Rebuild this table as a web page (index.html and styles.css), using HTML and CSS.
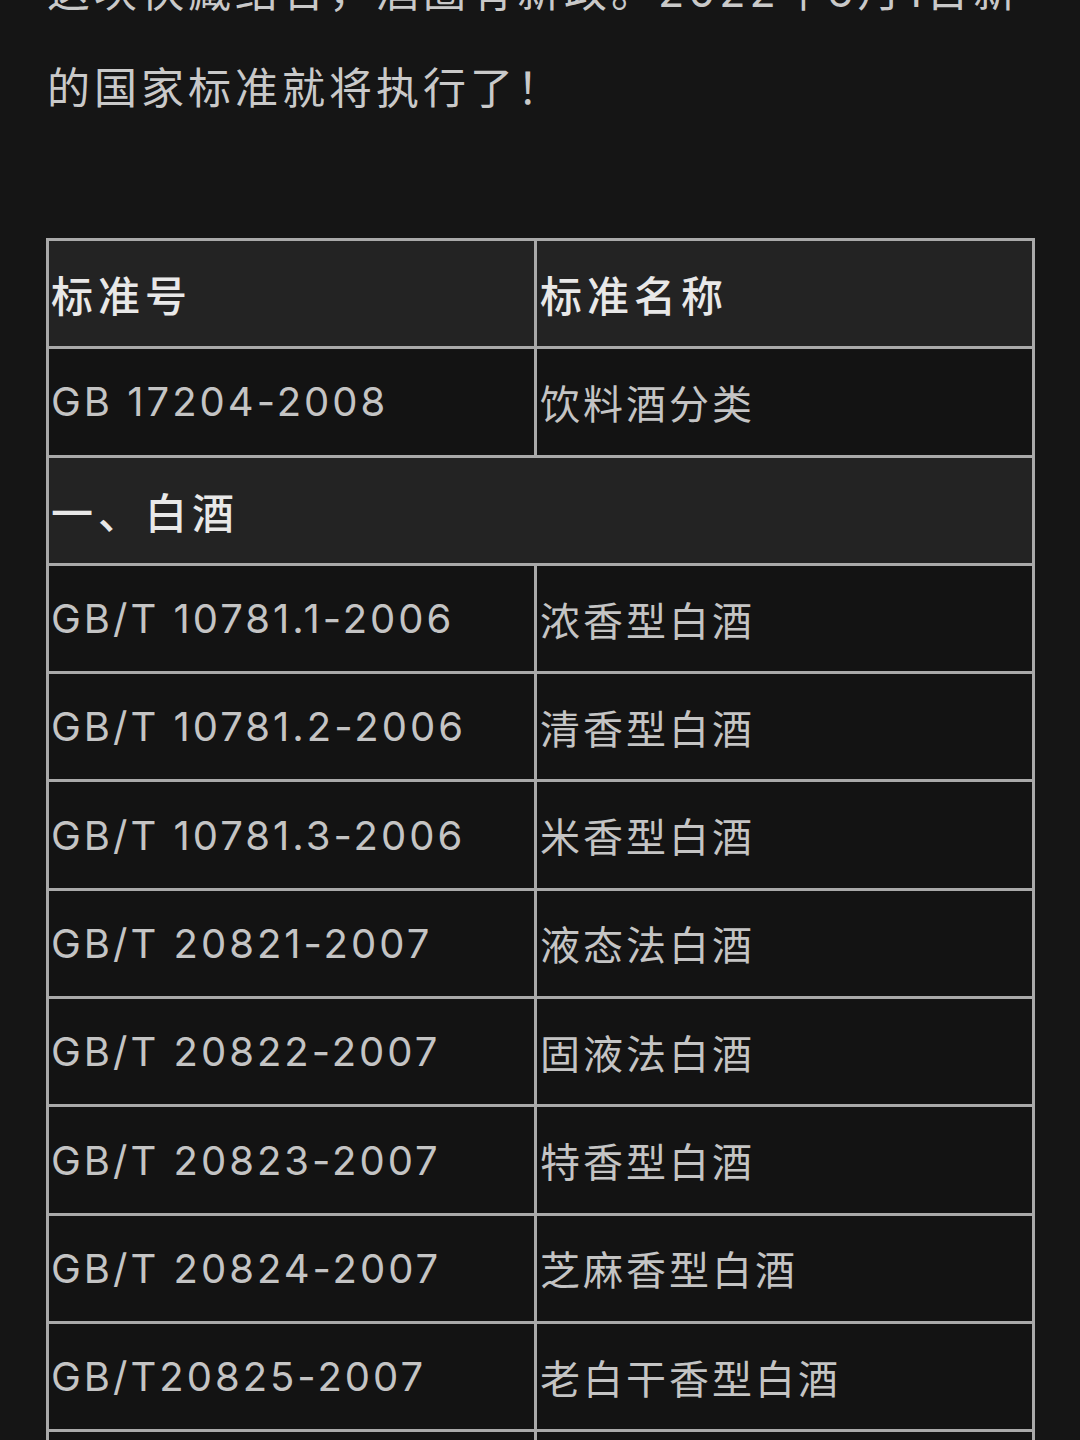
FILE: index.html
```html
<!DOCTYPE html>
<html lang="zh-CN">
<head>
<meta charset="utf-8">
<title>饮料酒标准</title>
<link rel="stylesheet" href="styles.css">
</head>
<body>
<div class="page">
  <p class="intro"><span class="line">这块快藏结合，酒圈有新政。2022年6月1日新</span><span class="line">的国家标准就将执行了！</span></p>
  <table class="std">
    <colgroup><col class="c1"><col class="c2"></colgroup>
    <tr class="head"><td>标准号</td><td>标准名称</td></tr>
    <tr><td>GB 17204-2008</td><td>饮料酒分类</td></tr>
    <tr class="head"><td colspan="2">一、白酒</td></tr>
    <tr><td>GB/T 10781.1-2006</td><td>浓香型白酒</td></tr>
    <tr><td>GB/T 10781.2-2006</td><td>清香型白酒</td></tr>
    <tr><td>GB/T 10781.3-2006</td><td>米香型白酒</td></tr>
    <tr><td>GB/T 20821-2007</td><td>液态法白酒</td></tr>
    <tr><td>GB/T 20822-2007</td><td>固液法白酒</td></tr>
    <tr><td>GB/T 20823-2007</td><td>特香型白酒</td></tr>
    <tr><td>GB/T 20824-2007</td><td>芝麻香型白酒</td></tr>
    <tr><td>GB/T20825-2007</td><td>老白干香型白酒</td></tr>
    <tr><td>GB/T 26760-2011</td><td>酱香型白酒</td></tr>
  </table>
</div>
</body>
</html>
```

FILE: styles.css
```css
html, body {
  margin: 0;
  padding: 0;
  background: #151515;
}
body {
  width: 1080px;
  height: 1440px;
  overflow: hidden;
  font-family: Inter, "Noto Sans CJK SC", sans-serif;
}
.page {
  padding: 0 46px;
}
.intro {
  margin: -57px 0 0 1px;
  color: #c9c9c9;
  font-size: 43px;
  line-height: 97px;
  letter-spacing: 4px;
}
.intro .line {
  display: block;
  white-space: nowrap;
}
.std {
  margin-top: 101px;
  width: 986px;
  table-layout: fixed;
  border-collapse: collapse;
  border: 3px solid #a9a9a9;
}
.c1 { width: 488px; }
.c2 { width: 498px; }
.std td {
  border: 3px solid #a9a9a9;
  height: 105.3px;
  padding: 0 0 0 2px;
  font-size: 40px;
  letter-spacing: 3px;
  color: #c4c4c4;
  background: #131313;
  white-space: nowrap;
  vertical-align: middle;
}
.std td + td {
  padding-left: 3px;
}
.std .head td {
  background: #232323;
  color: #e8e8e8;
  font-weight: 500;
  font-size: 42px;
  letter-spacing: 5px;
}
```
